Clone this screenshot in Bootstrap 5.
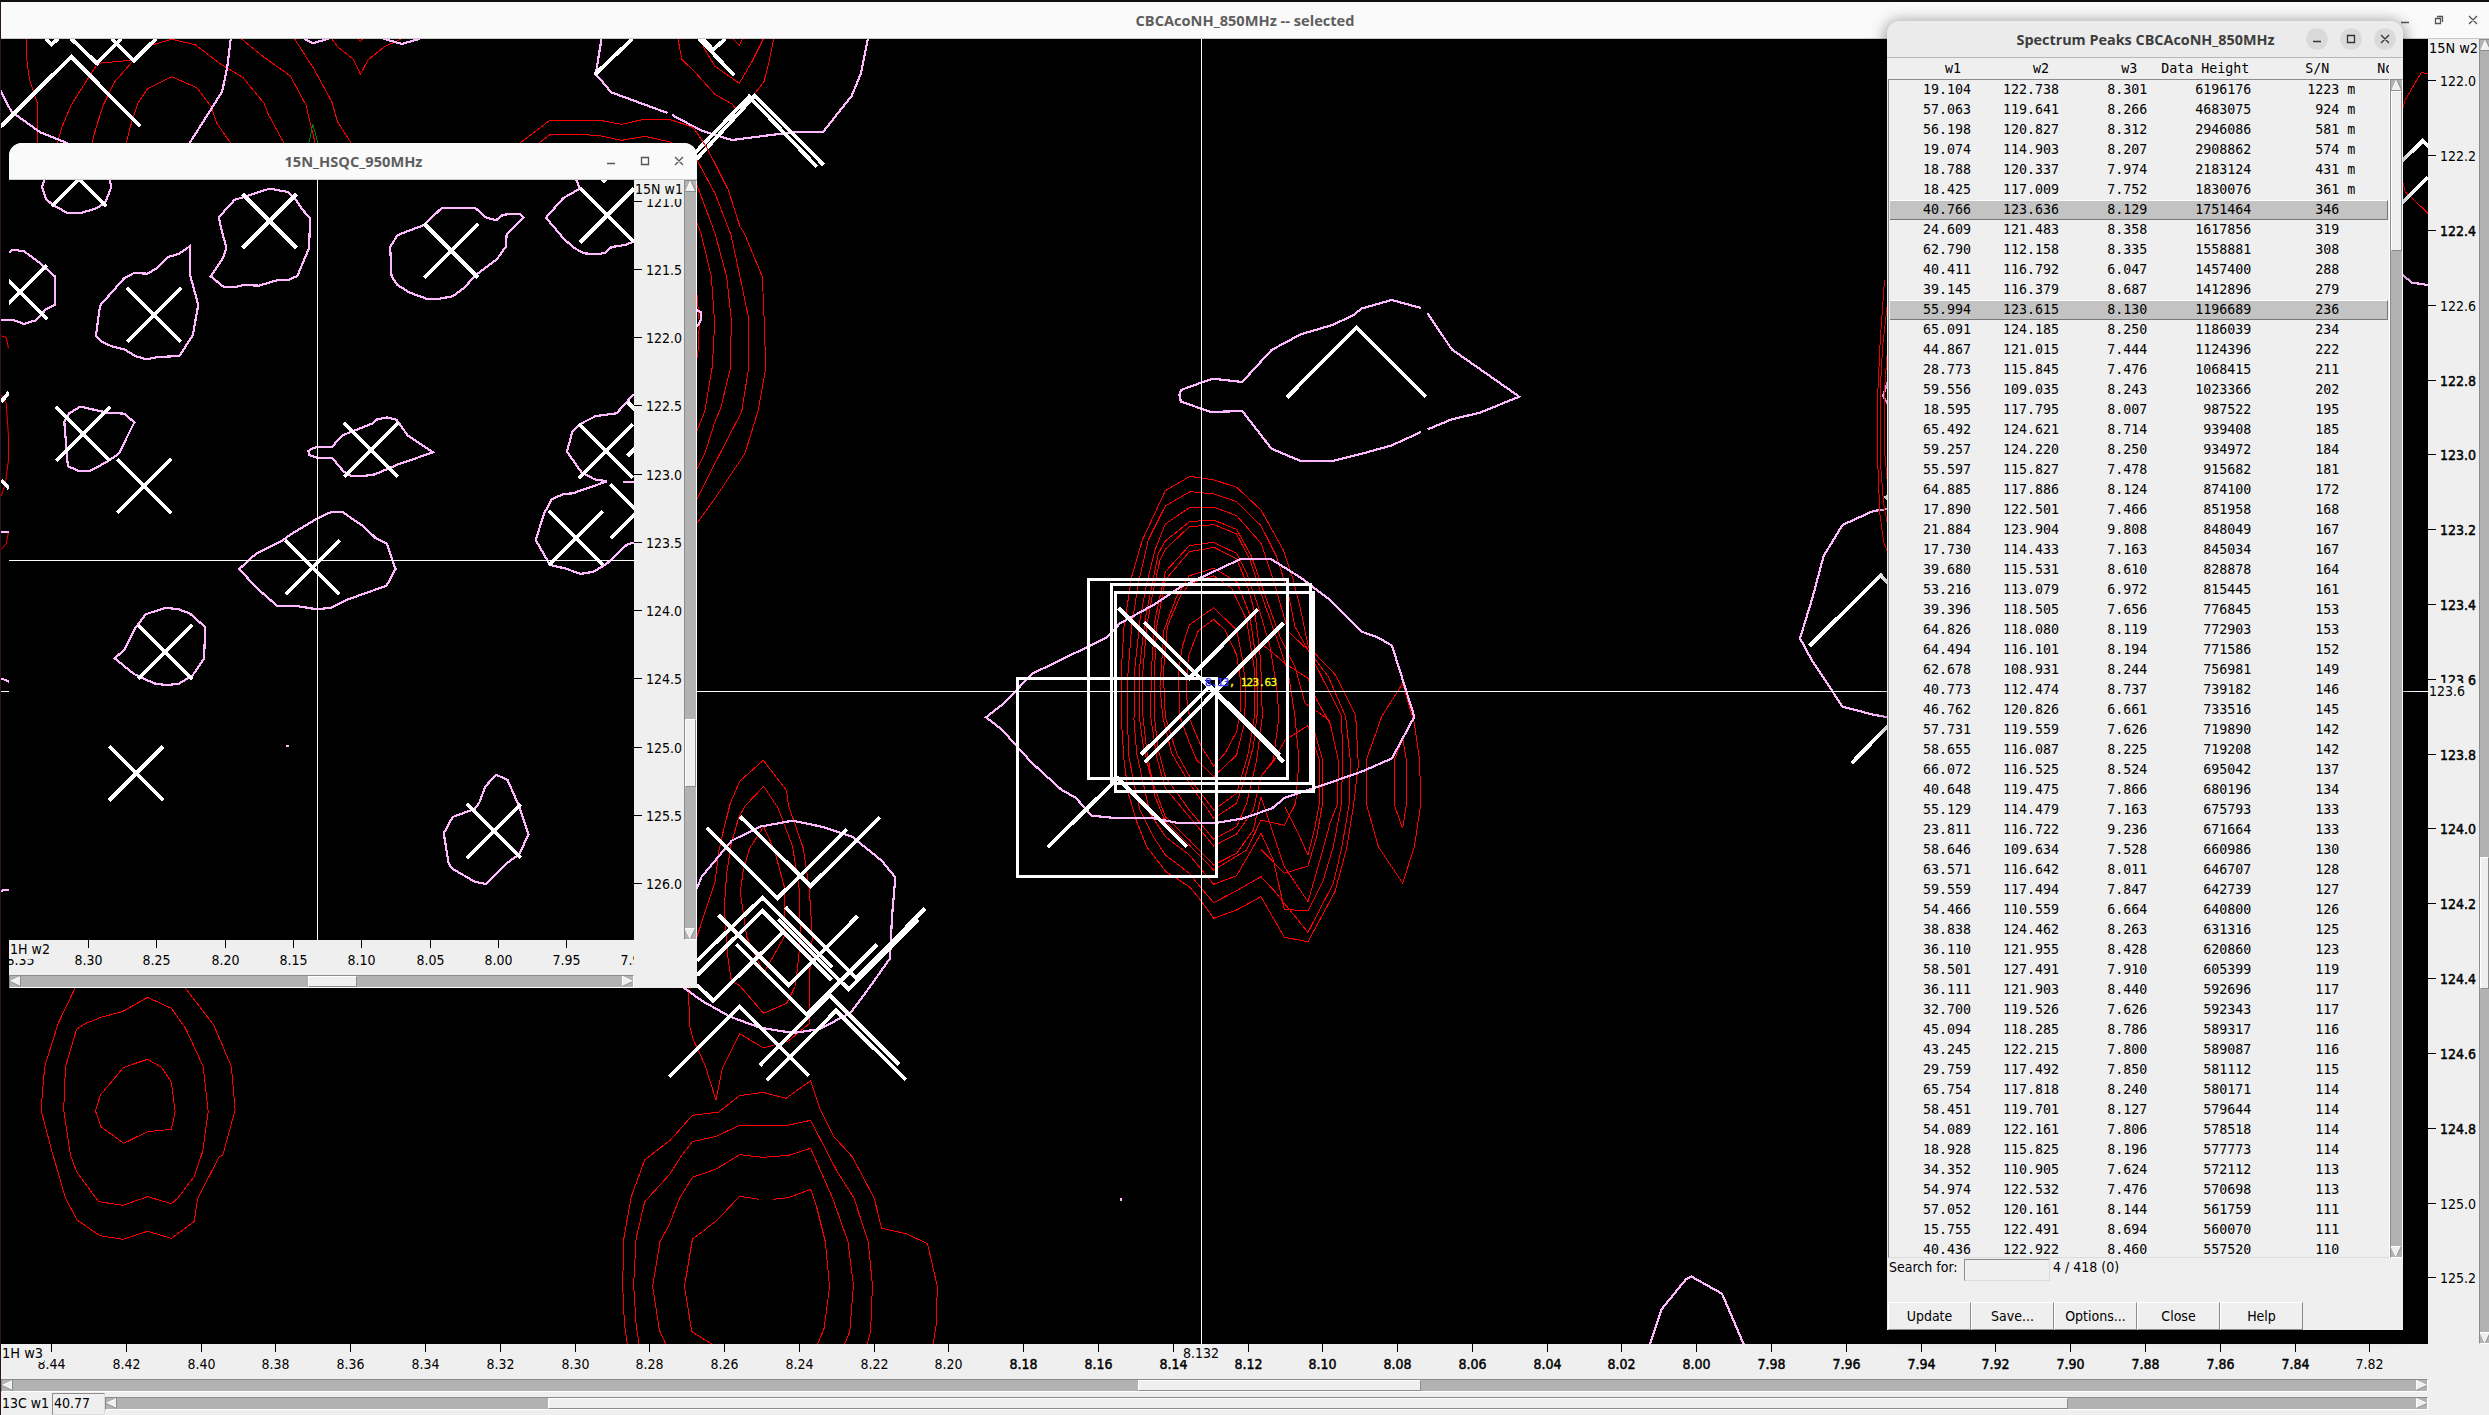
<!DOCTYPE html>
<html lang="en">
<head>
<meta charset="utf-8">
<title>CBCAcoNH_850MHz -- selected</title>
<link href="https://cdn.jsdelivr.net/npm/bootstrap@5.3.0/dist/css/bootstrap.min.css" rel="stylesheet">
<style>
html,body{height:1415px;width:2489px;overflow:hidden}
body{background:#efefef;color:#000;font-family:"DejaVu Sans Condensed","DejaVu Sans",sans-serif;font-stretch:condensed;font-size:14px;line-height:20px}
svg{display:block}
svg text{font-family:"DejaVu Sans Condensed","DejaVu Sans",sans-serif;font-stretch:condensed;font-size:14px}
.main-win{height:1415px;border-left:1px solid #2c1520;border-top:2px solid #120f10}
.title-strip{height:37px;background:#fafafa;border-bottom:1px solid #c9cccb;color:#5e5e5e}
.plot{background:#000}
.pk{stroke:#fff;stroke-width:3.8;fill:none}
.pk.box{stroke-width:3}
.pink{stroke:#ffb9ff;stroke-width:2.2;fill:none}
.red{stroke:#f00;stroke-width:1;fill:none}
.plot path,.plot rect{vector-effect:non-scaling-stroke;shape-rendering:crispEdges}
.hair{stroke:#fff;stroke-width:1;fill:none}
.sb{background:#b2b2b2;border:1px solid;border-color:#8c8c8c #fff #fff #8c8c8c;display:flex;flex:none}
.sb.v{flex-direction:column;width:13px}
.sb.h{height:13px}
.thumb{background:#efefef;border:1px solid;border-color:#fff #8c8c8c #8c8c8c #fff;flex:none}
.arw{flex:none;fill:#efefef;width:11px;height:11px}
.wbtn{stroke:#555;fill:none;stroke-width:1.3}
.floatwin{position:absolute;background:#efefef;border-radius:13px 13px 0 0;box-shadow:0 2px 14px 3px rgba(0,0,0,.34)}
.floatwin .title-strip{border-radius:13px 13px 0 0;position:relative}
.entry{background:#efefef;border:2px solid;border-color:#8c8c8c #dcdcdc #dcdcdc #8c8c8c;border-width:1.5px}
.mono{font:13.3px/20px "DejaVu Sans Mono",monospace;white-space:pre;margin:0;overflow:hidden}
.prow{height:20px;padding-left:1px;white-space:pre}
.prow.sel{background:#c3c3c3;border-top:1px solid #fff;border-bottom:1px solid #777;border-right:1px solid #777;line-height:18px}
.tkbtn{width:83px;height:28px;border-radius:0;border:1px solid;border-color:#fff #8c8c8c #8c8c8c #fff;background:#efefef;font-size:14px;line-height:20px;padding:0;color:#000}
</style>
<script src="https://cdn.jsdelivr.net/npm/bootstrap@5.3.0/dist/js/bootstrap.bundle.min.js"></script>
</head>
<body>
<div class="main-win d-flex flex-column">
  <div class="title-strip d-flex justify-content-center align-items-center position-relative flex-shrink-0">
    <svg width="2488" height="36" viewBox="1 2 2488 36">
      <text x="1245" y="26" text-anchor="middle" textLength="219" lengthAdjust="spacingAndGlyphs" style="font:bold 14px 'Open Sans','Noto Sans',sans-serif" fill="#5e5e5e">CBCAcoNH_850MHz -- selected</text>
      <g class="wbtn"><path d="M2401 22.5h8M2435.5 18.500h5v5h-5zM2437 16.500h5.500v5.500M2469 16l8 8M2477 16l-8 8"/></g>
    </svg>
  </div>
  <div class="d-flex flex-shrink-0" style="height:1305px">
    <svg class="plot flex-shrink-0" width="2427" height="1305" viewBox="1 39 2427 1305">
      <!-- upper left resonances -->
      <g transform="scale(.57398 .33333)">
        <path class="red" d="M46 116V170L51 235 65 310V430M100 430L107 385 124 315 170 190 233 180M160 430L167 385 180 315 200 245 233 180 265 135 299 118 340 134 385 193 423 232 460 310 468 345 495 430M220 430L228 375 240 310 257 266 299 230 343 263 368 320 378 370 402 430M420 116L460 172 506 228 533 315 545 400 549 430M513 116L548 210 578 305 588 365 612 430M578 116L588 140 615 177 628 223 641 180 670 140 698 118M624 116L628 125 632 116"/>
        <path class="red" d="M905 430L958 361H1045L1083 373 1122 358H1166L1205 380M938 430L958 404H1020L1045 407 1083 421 1124 409 1170 427M1181 116L1188 178 1213 220 1245 282 1275 312 1290 340M1225 140L1245 198 1288 250 1310 185 1330 116M1276 116L1288 135 1294 116M1348 116L1340 185 1331 245 1313 285"/>
        <path d="M538 430L545 373 554 430" style="stroke:#0a7a0a;fill:none"/>
        <path class="pink" d="M0 270L20 335 70 397 118 430M330 430L365 335 387 275 396 200 402 116M530 116L545 130 572 116M668 116L700 132 732 116M1048 116L1038 222 1065 277 1163 339M1171 345L1222 392 1275 420 1385 396H1434L1484 287 1500 220 1512 116"/>
        <path class="pk" d="M0 382L124 170 244 378M80 116L90 133 101 116M124 116L169 190 211 116M195 116L233 182 272 116M1102 116L1036 224M1218 116L1279 226M1225 116L1242 150 1264 116M1195 487L1305 290 1423 500M1200 503L1315 287 1435 495"/>
      </g>
      <!-- contours beside the HSQC window -->
      <g transform="translate(600 110) scale(.33333)">
        <path class="red" d="M215 30L280 53 322 115 385 240 420 350 433 370 487 500 493 640 497 775 475 900 435 1030 345 1165 291 1240M291 150L345 250 393 375 420 500 447 630 445 780 425 905 350 1050 291 1168M291 225L345 370 380 500 394 630 391 775 362 895 343 940 315 1030 291 1078M291 340L303 370 334 500 344 640 337 770 314 905 291 962M291 555L298 640 293 745"/>
        <path class="pink" d="M291 600L303 607V630L291 650"/>
      </g>
      <!-- slivers at the left border -->
      <g transform="translate(0 130) scale(.44643 .33333)">
        <path class="red" d="M3 618L14 622 19 655M3 795L14 820 19 920V990L12 1060 3 1098M19 1206L14 1240 3 1258"/>
        <path class="pink" d="M3 569H20M3 1206H20M3 1645L20 1655M3 2282L20 2279"/>
        <path class="pk" d="M3 815L20 787M3 1050L20 1075"/>
      </g>
      <!-- lower resonances -->
      <g transform="translate(0 985) scale(.61224 .33333)">
        <path class="red" d="M123 8L95 115 73 245 67 375 85 500 107 640 126 705 163 752 201 763 241 739 280 760 317 710 323 640 358 515 364 510 384 375 378 245 349 120 303 10M241 37L280 70 303 130 332 245 340 380 331 500 317 575 290 640 280 656 241 635 201 661 161 650 125 560 115 510 104 375 107 245 125 133 140 115 165 97 201 79ZM241 223L264 247 280 292 286 380 280 433 241 440 202 475 165 425 156 378 164 330 202 247Z"/>
        <path class="red" d="M1025 1080L1020 1020 1017 900 1019 760 1031 635 1053 525 1095 465 1131 391 1174 381 1208 332 1246 322 1284 340 1324 287 1340 375 1362 455 1392 515 1428 640 1440 730 1480 746 1515 776 1531 905 1529 1020 1524 1080M1044 1080L1039 1020 1035 900 1039 760 1053 650 1093 570 1113 513 1131 470 1170 454 1208 421H1286L1324 406 1366 555 1395 640 1418 770 1425 900 1422 1040 1416 1080M1088 1080L1077 1035 1066 905 1078 770 1093 720 1110 640 1131 577 1170 552 1208 509 1246 517 1288 511 1324 490 1360 640 1385 770 1394 900 1388 1040 1379 1080M1240 643L1208 634 1170 708 1131 762 1118 905 1130 1040 1165 1080M1263 643L1288 638 1324 613 1333 660 1348 770 1355 905 1346 1030 1335 1080"/>
      </g>
      <g transform="translate(640 740) scale(.33333)">
        <path class="red" d="M171 590L225 425 237 330 252 265 271 190 299 124 370 61 440 152 445 195 490 325 508 450 517 590 509 700V850L445 903 371 924 299 881 247 985 228 1080 195 975 158 895 149 855 145 740M371 139L412 200 428 240 458 320 478 450 481 600 472 690 465 740 440 790 371 820 299 737 274 722 262 640 253 500 260 400 274 310 297 230 316 197ZM371 260L403 330 433 440V590L405 640 371 700 320 590 310 520 301 455 310 390 329 325Z"/>
        <path class="pink" d="M130 742L185 782 270 830 360 863 460 879 540 867 632 818 690 740 750 655 756 530 766 412 725 362 636 290 545 260 458 242 360 260 275 302 185 410 171 445"/>
        <path class="pk" d="M201 264L412 475 620 268M301 230L512 438 719 232M171 662L367 473 577 682M171 706L367 512 575 720M236 525L446 736 653 528M437 502L649 715 855 505M415 538L626 748 835 540M171 735L220 782 430 575M289 613L500 824 712 613M88 1010L299 800 507 1008M359 977L569 766 777 974M380 1021L588 812 798 1020"/>
      </g>
      <!-- central peak -->
      <g transform="translate(980 460) scale(.33333)">
        <path class="red" d="M630 49L703 60 770 82 843 150 910 270 940 360 960 440 985 560 1065 643 1127 765 1135 915 1120 1040 1100 1165 1065 1295 984 1445 913 1432 843 1310 770 1350 701 1375 664 1323 628 1280 558 1235 500 1160 470 1085 445 1000 432 900 424 780V630L432 500 455 350 487 240 556 92Z
        M630 95L703 102 770 125 843 197 890 290 925 400 945 500 984 570 1045 650 1097 770 1111 900 1108 1030 1085 1165 1060 1270 984 1417 913 1330 885 1295 843 1250 770 1292 701 1328 660 1280 628 1240 556 1185 520 1130 480 1050 462 970 447 890 442 780 444 640 455 500 475 370 505 240 556 138Z
        M630 142H703L770 167 843 250 880 360 925 515 984 570 1035 670 1085 770 1088 920 1083 1040 1060 1160 1030 1260 984 1353 913 1348 900 1290 880 1200 843 1120 770 1247 701 1273 628 1185 556 1130 510 1060 490 970 470 880 462 780 464 630 480 480 500 370 525 270 556 192Z
        M630 184L703 181 770 208 815 290 860 420 900 530 945 620 975 730 1048 780 1075 900 1073 1030 1050 1090 1020 1200 984 1325 913 1220 843 1010 820 1110 770 1180 701 1215 628 1140 556 1070 515 960 490 860 478 770V630L495 480 515 380 535 280 556 243Z
        M628 200L703 194 770 222 810 300 850 420 885 520 925 640 945 770 957 900 947 1030 913 1096 843 1080 800 1170 701 1230 628 1155 556 1085 525 1010 500 870 489 770V630L500 500 520 390 540 300 556 268Z
        M628 257L700 247 770 280 800 340 835 440 870 560 890 680 897 770 880 900 843 950 820 1050 770 1122 701 1158 628 1070 556 985 530 890 512 770 514 630 525 480 556 335Z
        M628 275L703 262 770 297 800 370 825 460 842 600 847 770 830 900 800 1030 770 1100 701 1138 628 1050 556 950 535 870 523 770V640L530 500 556 360Z
        M628 347L701 325 770 365 808 460 829 600 833 750 820 860 790 970 770 1030 701 1075 628 970 575 880 548 770 540 680 552 510 590 410Z
        M628 372L701 347 755 385 800 480 822 620 825 760 805 880 770 1000 701 1050 640 970 590 880 556 770 550 640 562 500 600 410Z
        M628 495L701 443 770 510 790 610 797 700 793 790 770 885 701 950 650 900 625 840 600 770 595 640 607 560Z
        M655 512L701 478 735 510 770 585 780 650 783 740 770 815 735 880 701 918 664 860 630 780 618 700 625 590Z
        M843 550L880 580 915 610 984 655 1010 720 1050 790M843 948L880 905 915 840 984 797 1018 900 1020 1020 1005 1100 984 1185 950 1110 915 1040M843 1168L913 1240 984 1218 1010 1130 1028 1030 1028 900 1005 820
        M1268 670L1205 770 1159 900 1160 1035 1195 1160 1268 1270 1303 1160 1322 1035 1319 900 1303 790ZM1268 835L1243 900V1035L1268 1105 1279 1035V900Z"/>
        <path class="pink" d="M18 772L65 735 110 690 155 642 380 533 420 490 520 435 600 382 664 352 780 298 873 297 965 355 1050 420 1145 515 1195 533 1236 557 1303 770 1236 895 1150 933 1050 968 915 1013 876 1045 790 1075 700 1090H600L520 1075 395 1073 335 1067 287 1013 245 990 155 908 65 808Z"/>
        <path class="pk box" d="M326 358H922V955H326ZM395 374H992V970H395ZM407 398H1000V994H407ZM113 655H709V1249H113Z"/>
        <path class="pk" d="M416 445L628 655 833 448M493 487L703 697 911 489M483 884L690 678 900 884M494 907L703 697 911 906M203 1162L413 955 620 1160"/>
      </g>
      <!-- right hand resonances -->
      <g transform="translate(1170 280) scale(.47194 .33333)">
        <path class="pink" d="M532 84L470 60 407 85 387 107 342 136 277 163 215 210 153 306 90 296 23 330 20 345 23 365 87 396 153 393 215 506 275 542H348L407 521 470 496 532 456M546 448L597 418 657 398 740 350 597 208 546 100M1522 687L1490 693 1425 735 1385 828 1361 955 1335 1075 1359 1138 1425 1280 1490 1304 1522 1312M1522 300L1511 348 1522 375"/>
        <path class="red" d="M1514 0L1505 180 1500 330V560L1504 700 1512 785 1520 815M1521 60L1510 200 1505 330V540L1512 670 1522 745M1522 175L1514 330V510L1522 640"/>
        <path class="pk" d="M248 352L395 143 542 350M1355 1098L1506 886 1535 930M1444 1450L1535 1318M1515 656L1530 636"/>
      </g>
      <g transform="translate(1880 0) scale(.38839 .33333)">
        <path class="red" d="M1340 350L1352 300 1394 217 1411 222M1345 540L1352 575 1411 640"/>
        <path class="pink" d="M1340 820L1370 848 1411 855"/>
        <path class="pk" d="M1340 488L1397 423 1414 441M1340 613L1411 532"/>
      </g>
      <g transform="translate(1040 1180) scale(.54209 .33333)">
        <path class="pink" d="M1125 492L1147 387 1192 297 1202 290 1258 341 1298 492M150 54V63"/>
      </g>
      <text x="1205" y="686" textLength="72" style="font:11px 'DejaVu Sans Mono',monospace" fill="#ffff20" stroke="#ffff20" stroke-width=".3"><tspan fill="#33f" stroke="#33f">8.13</tspan>, 123.63</text>
      <path class="hair" d="M1201.500 39V1344M1 691.500H2428"/>
    </svg>
    <svg id="axisR" class="flex-shrink-0" width="51" height="1305" viewBox="2428 39 51 1305"></svg>
    <div class="sb v" style="width:11px">
      <svg class="arw" viewBox="0 0 11 11"><path d="M5.500 0L10.500 11H.5z"/><path d="M.5 11L5.500 0" stroke="#fff"/><path d="M0 10.500H11L6 0" fill="none" stroke="#8c8c8c"/></svg>
      <div style="height:806px"></div><div class="thumb" style="height:132px"></div><div class="flex-fill"></div>
      <svg class="arw" viewBox="0 0 11 11"><path d="M.5 0H10.500L5.500 11z"/><path d="M11 .5H0L5 10.500" stroke="#fff" fill="none"/><path d="M5.500 10.500L10.500 0" stroke="#8c8c8c"/></svg>
    </div>
  </div>
  <svg id="axisB" class="flex-shrink-0" width="2427" height="35" viewBox="1 1344 2427 35"></svg>
  <div class="sb h" style="width:2427px">
    <svg class="arw" viewBox="0 0 11 11"><path d="M0 5.500L11 0V11z"/><path d="M0 5.500L11 .5" stroke="#fff"/><path d="M10.500 0V10.500L0 5.500" fill="none" stroke="#8c8c8c"/></svg>
    <div style="width:1125px"></div><div class="thumb" style="width:283px"></div><div class="flex-fill"></div>
    <svg class="arw" viewBox="0 0 11 11"><path d="M0 0L11 5.500 0 11z"/><path d="M.5 11V.5L11 5.500" stroke="#fff" fill="none"/><path d="M0 10.500L11 5.500" stroke="#8c8c8c"/></svg>
  </div>
  <div class="d-flex align-items-center" style="height:23px;width:2427px">
    <div class="text-nowrap flex-shrink-0" style="width:51px;padding-left:1px;line-height:18px;margin-top:-2px">13C w1</div>
    <div class="entry flex-shrink-0" style="width:53px;height:22px;line-height:18px;padding-left:1px">40.77</div>
    <div class="sb h flex-fill">
      <svg class="arw" viewBox="0 0 11 11"><path d="M0 5.500L11 0V11z"/><path d="M0 5.500L11 .5" stroke="#fff"/><path d="M10.500 0V10.500L0 5.500" fill="none" stroke="#8c8c8c"/></svg>
      <div style="width:431px"></div><div class="thumb" style="width:1520px"></div><div class="flex-fill"></div>
      <svg class="arw" viewBox="0 0 11 11"><path d="M0 0L11 5.500 0 11z"/><path d="M.5 11V.5L11 5.500" stroke="#fff" fill="none"/><path d="M0 10.500L11 5.500" stroke="#8c8c8c"/></svg>
    </div>
  </div>
</div>

<div class="floatwin" style="left:9px;top:143px;width:688px;height:845px;box-shadow:none">
  <div class="title-strip">
    <svg width="688" height="36" viewBox="9 143 688 36">
      <text x="353.500" y="167" text-anchor="middle" textLength="138" lengthAdjust="spacingAndGlyphs" style="font:bold 14px 'Open Sans','Noto Sans',sans-serif" fill="#5e5e5e">15N_HSQC_950MHz</text>
      <g class="wbtn"><path d="M607 163.500h8M641.500 157.500h7v7h-7zM675 157l8 8M683 157l-8 8"/></g>
    </svg>
  </div>
  <div class="d-flex" style="height:760px">
    <svg class="plot flex-shrink-0" width="625" height="760" viewBox="9 180 625 760">
      <g transform="translate(0 130) scale(.44643 .33333)">
        <path class="pink" d="M99 150L94 172 103 208 121 227 150 248H184L213 236 235 220 249 172 246 150M604 176L645 186 662 208 678 240 695 265 692 355 666 438 645 450 620 451 580 467 545 465 527 471H501L472 439 500 383 507 352 498 310 490 262 525 210ZM990 233H1064L1088 262 1111 271 1125 256 1142 251H1163L1173 262 1135 312 1133 350 1113 388 1065 436 1040 473 1014 499 980 507 955 506 918 488 890 465 877 438 874 350 891 315 950 285ZM1291 150L1299 176 1262 204 1223 263 1262 325 1286 354 1309 370 1335 373 1355 369 1370 351 1400 345 1420 335M20 367L28 359 54 364 90 400 123 439V525L103 538 80 571 54 582 30 570H20M425 349V430L444 525 432 615 402 678 355 681 327 688 303 678 278 658 252 650 228 635 215 617 224 527 278 445 300 429 330 431 350 416 377 381 400 372ZM144 875L155 850 180 830 240 848 278 851 301 877 283 925 267 970 240 995 203 1022 177 1023 152 1009Z"/>
        <path class="pink" d="M691 963L698 957 711 950H744L767 916 835 880 845 868 867 862 888 869 913 916 970 967 890 1004 840 1033 810 1039 785 1037 770 1025 744 984H711L693 975ZM1420 792L1381 850 1335 858 1298 883 1282 905 1270 965 1303 1028 1332 1048 1360 1054 1283 1090 1262 1092 1236 1108 1219 1150 1200 1230 1232 1305 1268 1316 1300 1332 1330 1325 1360 1300 1405 1243 1420 1238M1395 1055H1420"/>
        <path class="pink" d="M536 1317L572 1273 632 1232 650 1214 711 1165 742 1146H767L815 1190 842 1225 866 1240 886 1317 866 1367 780 1408 742 1433 711 1438 664 1428H621L575 1374ZM371 1433L400 1438 425 1450 460 1492 457 1585 432 1635 400 1662 371 1665 345 1660 300 1632 257 1585 278 1560 303 1495 326 1453ZM1111 1934L1137 1950 1163 2030 1184 2113 1163 2173 1137 2198 1089 2262 1063 2255 1012 2215 1005 2200 994 2110 1014 2061 1063 2037 1073 2020 1087 1970ZM642 1846L646 1850"/>
      </g>
      <path id="xpeaks" class="pk" d=""/>
      <path class="hair" d="M317.500 180V940M9 560.500H634"/>
    </svg>
    <svg id="axisSR" class="flex-shrink-0" width="50" height="760" viewBox="634 180 50 760"></svg>
    <div class="sb v">
      <svg class="arw" viewBox="0 0 11 11"><path d="M5.500 0L10.500 11H.5z"/><path d="M.5 11L5.500 0" stroke="#fff"/><path d="M0 10.500H11L6 0" fill="none" stroke="#8c8c8c"/></svg>
      <div style="height:527px"></div><div class="thumb" style="height:68px"></div><div class="flex-fill"></div>
      <svg class="arw" viewBox="0 0 11 11"><path d="M.5 0H10.500L5.500 11z"/><path d="M11 .5H0L5 10.500" stroke="#fff" fill="none"/><path d="M5.500 10.500L10.500 0" stroke="#8c8c8c"/></svg>
    </div>
  </div>
  <svg id="axisSB" width="625" height="35" viewBox="9 940 625 35"></svg>
  <div class="sb h" style="width:625px">
    <svg class="arw" viewBox="0 0 11 11"><path d="M0 5.500L11 0V11z"/><path d="M0 5.500L11 .5" stroke="#fff"/><path d="M10.500 0V10.500L0 5.500" fill="none" stroke="#8c8c8c"/></svg>
    <div style="width:287px"></div><div class="thumb" style="width:49px"></div><div class="flex-fill"></div>
    <svg class="arw" viewBox="0 0 11 11"><path d="M0 0L11 5.500 0 11z"/><path d="M.5 11V.5L11 5.500" stroke="#fff" fill="none"/><path d="M0 10.500L11 5.500" stroke="#8c8c8c"/></svg>
  </div>
</div>

<div class="floatwin" style="left:1887px;top:21px;width:516px;height:1309px">
  <div class="title-strip" style="background:#ebebeb;border-color:#b8b8b8">
    <svg width="516" height="36" viewBox="1887 21 516 36">
      <text x="2145.500" y="45" text-anchor="middle" textLength="258" lengthAdjust="spacingAndGlyphs" style="font:bold 14px 'Open Sans','Noto Sans',sans-serif" fill="#3d3d3d">Spectrum Peaks CBCAcoNH_850MHz</text>
      <g fill="#dadada"><circle cx="2317" cy="39" r="10.800"/><circle cx="2351" cy="39" r="10.800"/><circle cx="2385" cy="39" r="10.800"/></g>
      <g class="wbtn" style="stroke:#333"><path d="M2313 41.500h8M2347.500 35.500h7v7h-7zM2381 35l8 8M2389 35l-8 8"/></g>
    </svg>
  </div>
  <div class="mono" style="height:21px;width:502px;padding-left:2px;line-height:22px">       w1         w2         w3   Data Height       S/N      Note</div>
  <div class="d-flex" style="height:1179px;padding-left:1px">
    <div class="mono" id="peaks" style="width:502px;border:1px solid;border-color:#8c8c8c #fff #dcdcdc #8c8c8c;padding:0 1px 0 1px"></div>
    <div class="sb v">
      <svg class="arw" viewBox="0 0 11 11"><path d="M5.500 0L10.500 11H.5z"/><path d="M.5 11L5.500 0" stroke="#fff"/><path d="M0 10.500H11L6 0" fill="none" stroke="#8c8c8c"/></svg>
      <div class="thumb" style="height:160px"></div><div class="flex-fill"></div>
      <svg class="arw" viewBox="0 0 11 11"><path d="M.5 0H10.500L5.500 11z"/><path d="M11 .5H0L5 10.500" stroke="#fff" fill="none"/><path d="M5.500 10.500L10.500 0" stroke="#8c8c8c"/></svg>
    </div>
  </div>
  <div class="d-flex" style="height:44px;padding:1px 0 0 2px">
    <div class="text-nowrap" style="width:75px;line-height:16px">Search for:</div>
    <div class="entry" style="width:86px;height:22px"></div>
    <div style="padding-left:3px;line-height:16px">4 / 418 (0)</div>
  </div>
  <div class="d-flex" style="padding-left:1px">
    <button class="btn tkbtn">Update</button><button class="btn tkbtn">Save...</button><button class="btn tkbtn">Options...</button><button class="btn tkbtn">Close</button><button class="btn tkbtn">Help</button>
  </div>
</div>

<script>
const rows=`19.104 122.738 8.301 6196176 1223 m
57.063 119.641 8.266 4683075 924 m
56.198 120.827 8.312 2946086 581 m
19.074 114.903 8.207 2908862 574 m
18.788 120.337 7.974 2183124 431 m
18.425 117.009 7.752 1830076 361 m
40.766 123.636 8.129 1751464 346
24.609 121.483 8.358 1617856 319
62.790 112.158 8.335 1558881 308
40.411 116.792 6.047 1457400 288
39.145 116.379 8.687 1412896 279
55.994 123.615 8.130 1196689 236
65.091 124.185 8.250 1186039 234
44.867 121.015 7.444 1124396 222
28.773 115.845 7.476 1068415 211
59.556 109.035 8.243 1023366 202
18.595 117.795 8.007 987522 195
65.492 124.621 8.714 939408 185
59.257 124.220 8.250 934972 184
55.597 115.827 7.478 915682 181
64.885 117.886 8.124 874100 172
17.890 122.501 7.466 851958 168
21.884 123.904 9.808 848049 167
17.730 114.433 7.163 845034 167
39.680 115.531 8.610 828878 164
53.216 113.079 6.972 815445 161
39.396 118.505 7.656 776845 153
64.826 118.080 8.119 772903 153
64.494 116.101 8.194 771586 152
62.678 108.931 8.244 756981 149
40.773 112.474 8.737 739182 146
46.762 120.826 6.661 733516 145
57.731 119.559 7.626 719890 142
58.655 116.087 8.225 719208 142
66.072 116.525 8.524 695042 137
40.648 119.475 7.866 680196 134
55.129 114.479 7.163 675793 133
23.811 116.722 9.236 671664 133
58.646 109.634 7.528 660986 130
63.571 116.642 8.011 646707 128
59.559 117.494 7.847 642739 127
54.466 110.559 6.664 640800 126
38.838 124.462 8.263 631316 125
36.110 121.955 8.428 620860 123
58.501 127.491 7.910 605399 119
36.111 121.903 8.440 592696 117
32.700 119.526 7.626 592343 117
45.094 118.285 8.786 589317 116
43.245 122.215 7.800 589087 116
29.759 117.492 7.850 581112 115
65.754 117.818 8.240 580171 114
58.451 119.701 8.127 579644 114
54.089 122.161 7.806 578518 114
18.928 115.825 8.196 577773 114
34.352 110.905 7.624 572112 113
54.974 122.532 7.476 570698 113
57.052 120.161 8.144 561759 111
15.755 122.491 8.694 560070 111
40.436 122.922 8.460 557520 110`.split("\n");
const widths=[10,11,11,13,11,2];
document.getElementById("peaks").innerHTML=rows.map((r,i)=>{
  const t=r.split(" ").map((c,k)=>c.padStart(widths[k])).join("");
  return '<div class="prow'+(i==6||i==11?' sel':'')+'">'+t+'</div>';
}).join("");

const tick=(x1,y1,x2,y2)=>`<path d="M${x1} ${y1}L${x2} ${y2}" stroke="#000" stroke-width="1" shape-rendering="crispEdges"/>`;
const label=(x,y,t,len,bold,anchor)=>`<text x="${x}" y="${y}" text-anchor="${anchor||'start'}" textLength="${len}" lengthAdjust="spacingAndGlyphs"${bold?' stroke="#000" stroke-width=".45"':''}>${t}</text>`;
// main window, right axis
let s="";
for(let i=0;i<17;i++){const y=Math.round(80.300+i*74.820)+.5,v=(122+i*.2).toFixed(1);
  s+=tick(2428,y,2436,y)+label(2440,y+5,v,36,i==2||(i>=4&&i<=14));}
s+='<rect x="2428" y="683" width="40" height="17" fill="#efefef"/>'+label(2429,696,"123.6",36)+'<rect x="2428" y="39" width="51" height="18" fill="#efefef"/>'+label(2429,53,"15N w2",49);
axisR.innerHTML=s;
// main window, bottom axis
s="";
for(let i=0;i<32;i++){const x=Math.round(51.100+i*74.780)+.5,v=(8.44-i*.02).toFixed(2);
  s+=tick(x,1344,x,1352)+label(x,1369,v,28,i>=13&&i<31,"middle");}
s+='<rect x="1" y="1345" width="43" height="17" fill="#efefef"/>'+label(2,1358,"1H w3",41)+'<rect x="1182" y="1345" width="38" height="15" fill="#efefef"/>'+label(1201,1358,"8.132",36,0,"middle");
axisB.innerHTML=s;
// HSQC window axes
s="";
for(let i=0;i<11;i++){const y=Math.round(200.500+i*68.250)+.5;s+=tick(634,y,642,y)+label(646,y+5.500,(121+i*.5).toFixed(1),36);}
s+='<rect x="634" y="180" width="50" height="19" fill="#efefef"/>'+label(635,194,"15N w1",48);
axisSR.innerHTML=s;
s="";
for(let i=-1;i<9;i++){const x=Math.round(88+i*68.300)+.5;s+=tick(x,940,x,948)+label(x,965,(8.3-i*.05).toFixed(2),28,0,"middle");}
s+='<rect x="9" y="940" width="42" height="19" fill="#efefef"/>'+label(10,954,"1H w2",40);
axisSB.innerHTML=s;
// HSQC peak markers
const pts=[[79,179.300],[269.600,221],[451.300,250.700],[607.100,215.300],[20,292.300],[154,314.700],[83,433.700],[144.200,486],[371,449.700],[605.800,451],[575.900,538],[312.500,567.300],[165.200,652],[136.200,773.300],[493.800,831],[654.500,429],[637.500,511.300],[629.500,155]];
xpeaks.setAttribute("d",pts.map(([x,y])=>`M${x-27} ${y-27}l54 54M${x+27} ${y-27}l-54 54`).join(""));
</script>
</body>
</html>
